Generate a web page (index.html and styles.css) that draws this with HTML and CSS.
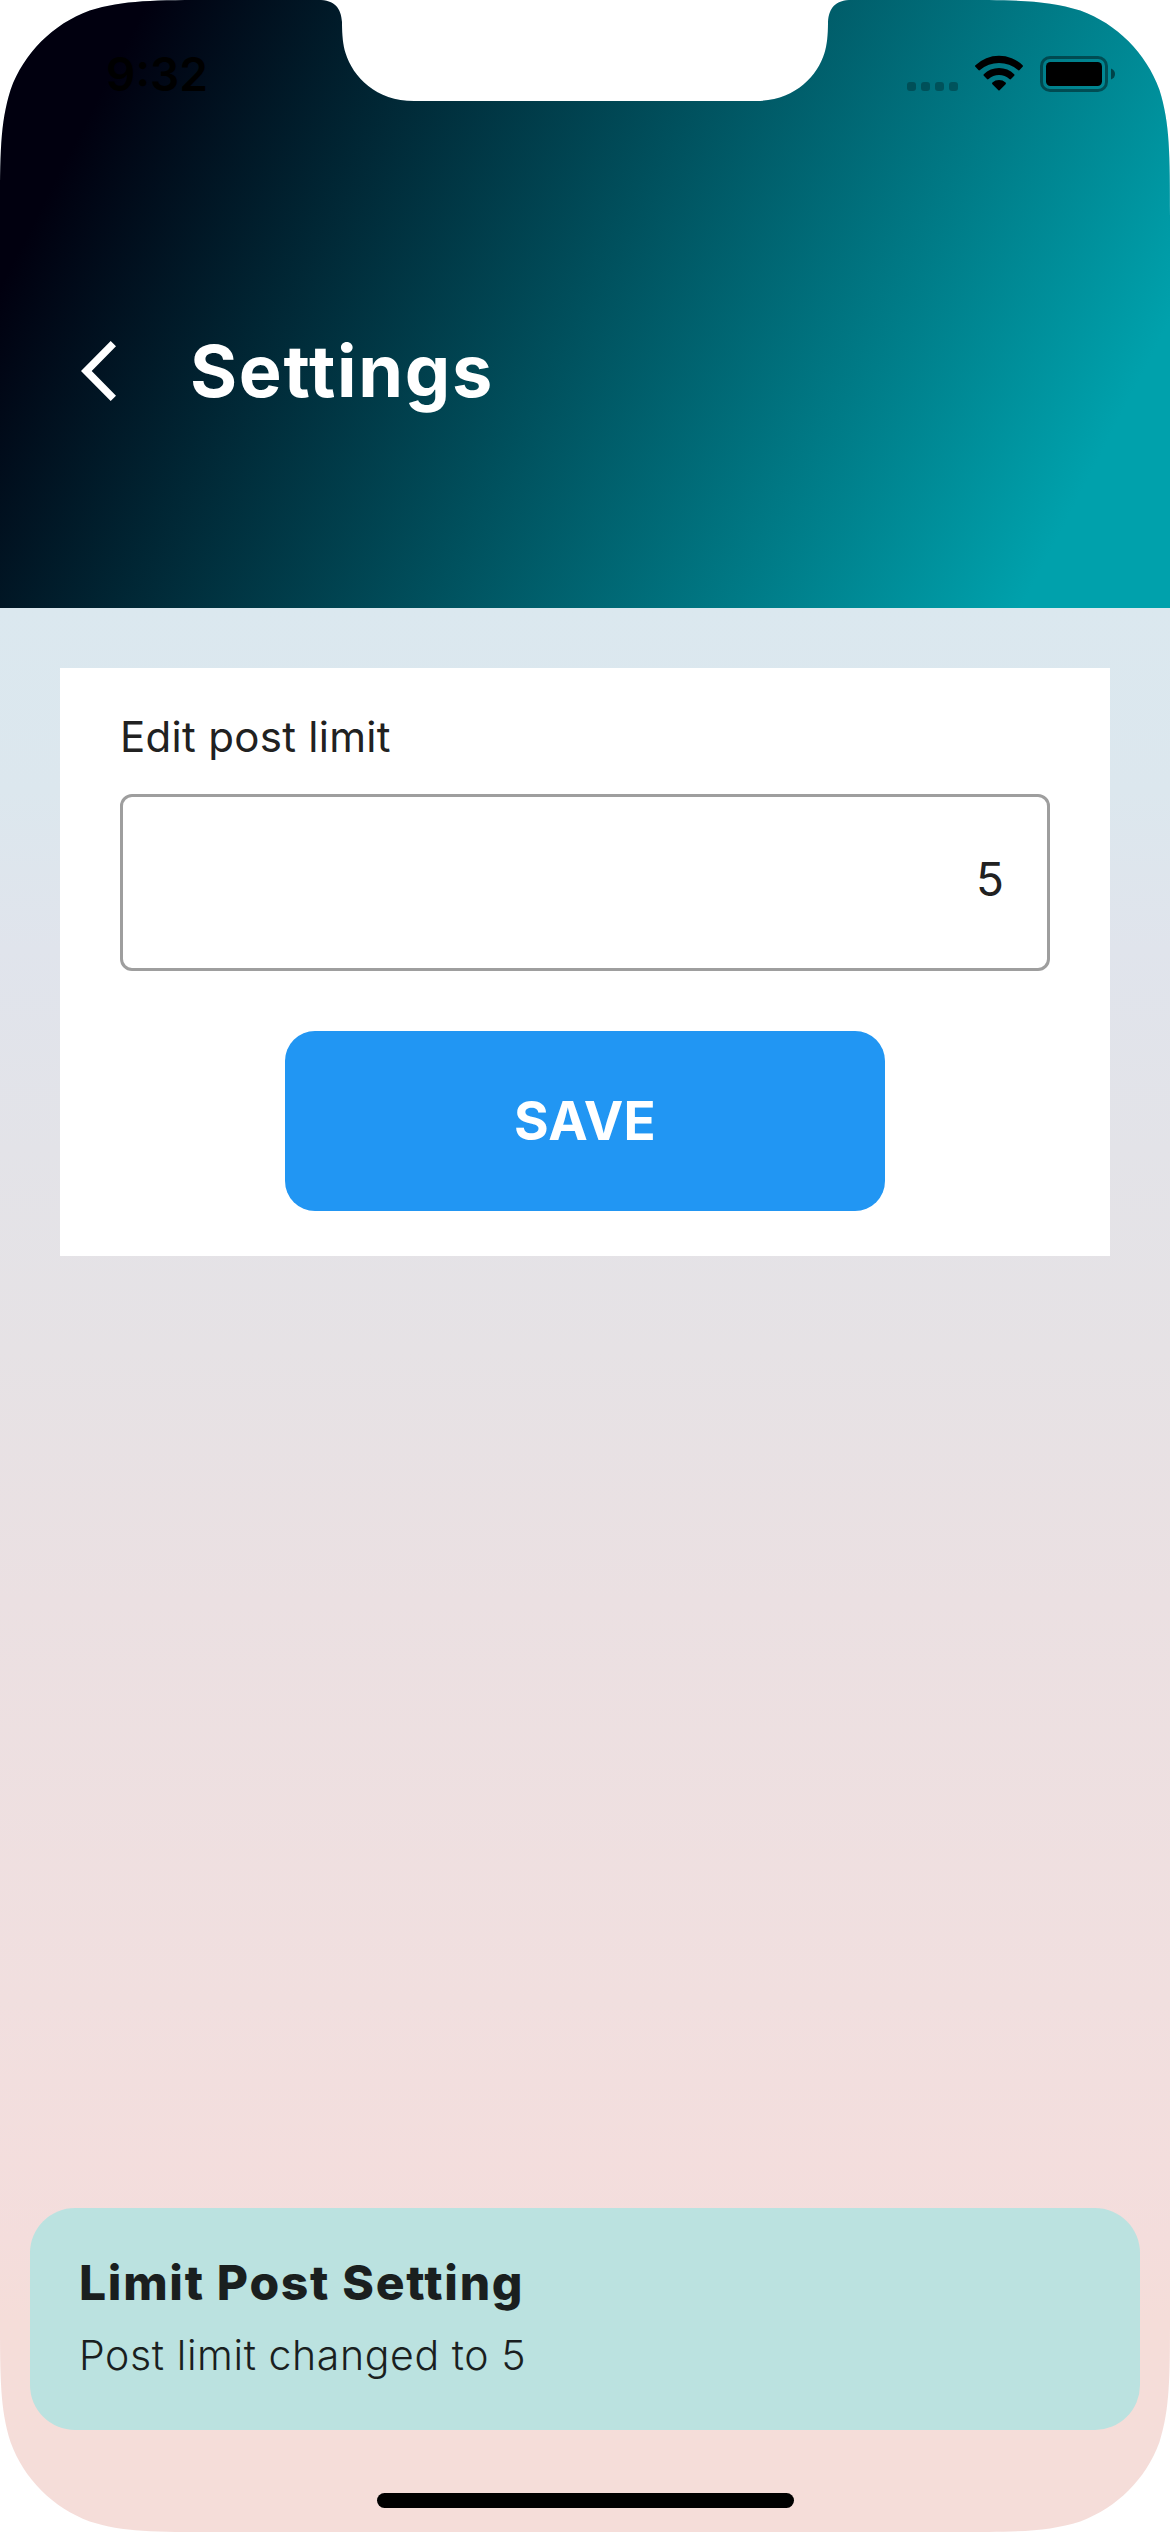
FILE: index.html
```html
<!DOCTYPE html>
<html lang="en">
<head>
<meta charset="utf-8">
<title>Settings</title>
<link rel="stylesheet" href="styles.css">
</head>
<body>
<div class="screen">
  <header class="header">
    <div class="status-bar">
      <span class="time">9:32</span>
      <svg class="status-icons" width="208" height="37" viewBox="907 55 208 37" aria-hidden="true">
        <g opacity=".27">
          <rect x="907" y="82" width="9" height="9" rx="3"/>
          <rect x="921" y="82" width="9" height="9" rx="3"/>
          <rect x="935" y="82" width="9" height="9" rx="3"/>
          <rect x="949" y="82" width="9" height="9" rx="3"/>
        </g>
        <g transform="translate(975 55)">
          <path d="M.4 10.2A34 34 0 0 1 47.6 10.2Q48.4 11 47.6 11.8L44.6 15Q43.8 15.8 43 15A29 29 0 0 0 5 15Q4.200 15.800 3.400 15L.4 11.800Q-.4 11 .4 10.200Z"/>
          <path d="M8.800 19.200A21.500 21.500 0 0 1 39.200 19.200Q40 20 39.200 20.800L36 24Q35.200 24.800 34.400 24A15.500 15.500 0 0 0 13.600 24Q12.800 24.800 12 24L8.800 20.800Q8 20 8.800 19.200Z"/>
          <path d="M17.400 27.600A10 10 0 0 1 30.600 27.600Q31.400 28.400 30.600 29.200L24.600 35.300Q24 35.900 23.400 35.300L17.400 29.200Q16.600 28.400 17.400 27.600Z"/>
        </g>
        <rect x="1041.500" y="57.500" width="65" height="33" rx="8.500" fill="none" stroke="#000" stroke-width="3" opacity=".42"/>
        <rect x="1046" y="62" width="56" height="24" rx="4.500"/>
        <path d="M1111 68.500Q1115 70 1115 74Q1115 78 1111 79.500Z" opacity=".5"/>
      </svg>
    </div>
    <div class="title-row">
      <svg class="back" width="36" height="60" viewBox="0 0 36 60" aria-label="Back"><path d="M29.700 0L35 5.300L10.700 30L35 54.700L29.700 60L0 30Z" fill="#fff"/></svg>
      <h1 class="title">Settings</h1>
    </div>
  </header>
  <main class="content">
    <section class="card">
      <label class="label" for="limit">Edit post limit</label>
      <input class="field" id="limit" value="5">
      <button class="save">SAVE</button>
    </section>
  </main>
  <aside class="toast">
    <strong class="toast-title">Limit Post Setting</strong>
    <span class="toast-text">Post limit changed to 5</span>
  </aside>
  <div class="home-bar"></div>
</div>
</body>
</html>
```
FILE: styles.css
```css
* { box-sizing: border-box; }

body {
  margin: 0;
  background: #fff;
  font-family: Inter, "Liberation Sans", sans-serif;
  color: #212121;
}

/* Device outline: continuous corners and the camera notch */
.screen {
  display: flex;
  flex-direction: column;
  align-items: center;
  width: 1170px;
  height: 2532px;
  background: linear-gradient(180deg, #dbe8ef 608px, #dce7ee 790px, #e0e4ec 950px, #e3e3e8 1150px, #e6e2e5 1350px, #ebe0e2 1600px, #f1dfdf 2000px, #f4dddc 2240px, #f5ddd9 2320px);
  clip-path: path("M217 0L318 0C335 0 341 8 342 22C342 36 343 45 345.500 53C353 77 376 101 414 101L756 101C794 101 817 77 824.500 53C827 45 828 36 828 22C829 8 835 0 852 0L953 0C1015.400 0 1046.700 0 1080.300 10.600C1117 24 1146 53 1159.400 89.700C1170 123.300 1170 154.600 1170 217L1170 2315C1170 2377.400 1170 2408.700 1159.400 2442.300C1146 2479 1117 2508 1080.300 2521.400C1046.700 2532 1015.400 2532 953 2532L217 2532C154.600 2532 123.300 2532 89.700 2521.400C53 2508 24 2479 10.600 2442.300C0 2408.700 0 2377.400 0 2315L0 217C0 154.600 0 123.300 10.600 89.700C24 53 53 24 89.700 10.600C123.300 0 154.600 0 217 0Z");
}

.header {
  width: 100%;
  height: 607.5px;
  background: linear-gradient(117.400deg, #01000f 10%, #00a1ac 90%);
}

.status-bar {
  display: flex;
  justify-content: space-between;
  align-items: flex-start;
  height: 141px;
  padding: 55px 55px 0 106px;
}

.time {
  margin-top: -9px;
  color: #000;
  font-size: 46px;
  font-weight: 600;
  line-height: 56px;
}

.title-row {
  display: flex;
  align-items: center;
  gap: 73px;
  height: 460px;
  padding-left: 81px;
}

.title {
  margin: 0;
  color: #fff;
  font-size: 72px;
  font-weight: 700;
  line-height: 84px;
  letter-spacing: 1.7px;
}

.content {
  width: 100%;
  padding: 60px;
}

.card {
  display: flex;
  flex-direction: column;
  align-items: center;
  height: 588px;
  padding: 44px 60px;
  background: #fff;
}

.label {
  align-self: flex-start;
  font-size: 42px;
  line-height: 50px;
  letter-spacing: 0.3px;
}

.field {
  width: 930px;
  height: 177px;
  margin-top: 32px;
  padding: 0 43px 6px;
  border: 3px solid #9e9e9e;
  border-radius: 12px;
  background: #fff;
  color: #212121;
  font: 400 46px Inter, "Liberation Sans", sans-serif;
  text-align: right;
}

.save {
  width: 600px;
  height: 180px;
  margin-top: 60px;
  padding: 0;
  border: 0;
  border-radius: 30px;
  background: #2196f3;
  color: #fff;
  font: 700 53px Inter, "Liberation Sans", sans-serif;
  letter-spacing: 0.2px;
}

.toast {
  display: flex;
  flex-direction: column;
  width: 1110px;
  height: 222px;
  margin-top: auto;
  padding: 46px 49px;
  border-radius: 45px;
  background: #bbe2e0;
  color: #1a1f1f;
}

.toast-title {
  font-size: 48px;
  font-weight: 800;
  line-height: 58px;
  letter-spacing: 1.7px;
}

.toast-text {
  margin-top: 18px;
  font-size: 41px;
  font-weight: 300;
  line-height: 50px;
  letter-spacing: 0.6px;
}

.home-bar {
  width: 417px;
  height: 15px;
  margin: 63px 0 24px;
  border-radius: 7.5px;
  background: #000;
}
```
